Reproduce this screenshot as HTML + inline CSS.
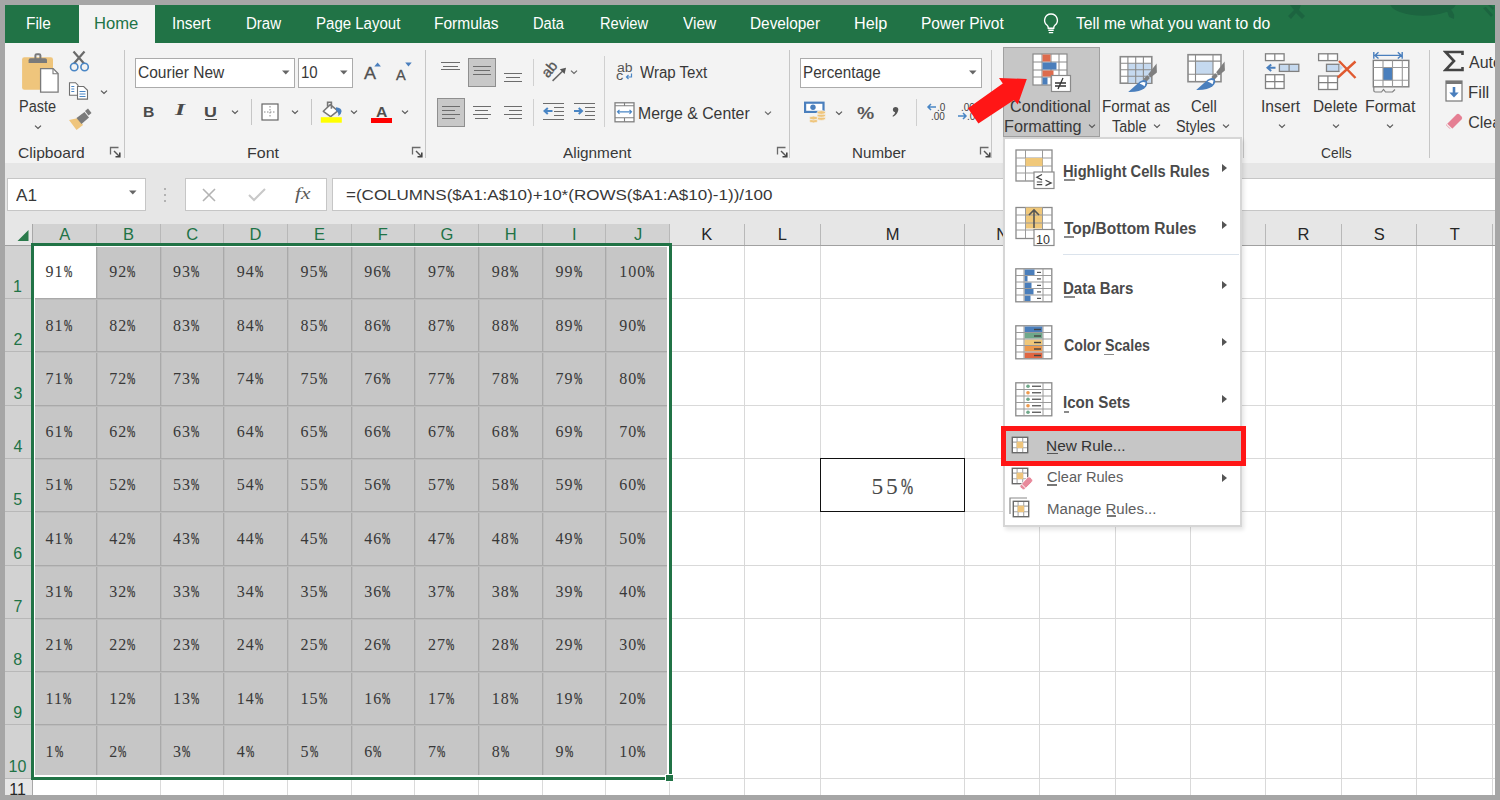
<!DOCTYPE html>
<html><head><meta charset="utf-8"><style>
html,body{margin:0;padding:0;width:1500px;height:800px;overflow:hidden;background:#a6a6a6}
body>div,body>svg{position:absolute}
.t{white-space:nowrap;transform-origin:0 0}
.c{font:16px/16px 'Liberation Serif',serif;letter-spacing:1px;color:#383838}
.p{display:inline-block;transform:scaleX(.62);transform-origin:0 0;-webkit-text-stroke:0.4px currentColor}
</style></head><body>
<div style="left:5px;top:5px;width:1490px;height:38px;background:#217346"></div>
<svg style="left:1280px;top:5px;" width="215" height="16" viewBox="0 0 215 16"><g fill="#1c6440"><ellipse cx="143" cy="-2" rx="33" ry="12.8"/><path d="M166 3q9 1 8 11l-5-2z"/><path d="M10 0l4 5-6 6 3 3 5-6 6 6 3-3-6-6 2-5z"/><path d="M203 3l8 9 2-2-7-8z M208 0l5 5 1-2-3-3z"/></g></svg>
<div style="left:79.4px;top:5px;width:75.6px;height:38px;background:#f3f3f3"></div>
<div class="t" style="left:25.60px;top:16.46px;font-size:16px;line-height:16px;font-family:'Liberation Sans',sans-serif;color:#ffffff;transform:scaleX(0.9625);">File</div>
<div class="t" style="left:94.30px;top:16.46px;font-size:16px;line-height:16px;font-family:'Liberation Sans',sans-serif;color:#217346;transform:scaleX(1.0380);">Home</div>
<div class="t" style="left:172.06px;top:16.46px;font-size:16px;line-height:16px;font-family:'Liberation Sans',sans-serif;color:#ffffff;transform:scaleX(0.9621);">Insert</div>
<div class="t" style="left:245.53px;top:16.46px;font-size:16px;line-height:16px;font-family:'Liberation Sans',sans-serif;color:#ffffff;transform:scaleX(0.9389);">Draw</div>
<div class="t" style="left:315.73px;top:16.46px;font-size:16px;line-height:16px;font-family:'Liberation Sans',sans-serif;color:#ffffff;transform:scaleX(0.9390);">Page Layout</div>
<div class="t" style="left:434.39px;top:16.46px;font-size:16px;line-height:16px;font-family:'Liberation Sans',sans-serif;color:#ffffff;transform:scaleX(0.9692);">Formulas</div>
<div class="t" style="left:533.45px;top:16.46px;font-size:16px;line-height:16px;font-family:'Liberation Sans',sans-serif;color:#ffffff;transform:scaleX(0.9160);">Data</div>
<div class="t" style="left:599.85px;top:16.46px;font-size:16px;line-height:16px;font-family:'Liberation Sans',sans-serif;color:#ffffff;transform:scaleX(0.9171);">Review</div>
<div class="t" style="left:683.00px;top:16.46px;font-size:16px;line-height:16px;font-family:'Liberation Sans',sans-serif;color:#ffffff;transform:scaleX(0.9635);">View</div>
<div class="t" style="left:749.80px;top:16.46px;font-size:16px;line-height:16px;font-family:'Liberation Sans',sans-serif;color:#ffffff;transform:scaleX(0.9600);">Developer</div>
<div class="t" style="left:854.33px;top:16.46px;font-size:16px;line-height:16px;font-family:'Liberation Sans',sans-serif;color:#ffffff;transform:scaleX(1.0129);">Help</div>
<div class="t" style="left:921.39px;top:16.46px;font-size:16px;line-height:16px;font-family:'Liberation Sans',sans-serif;color:#ffffff;transform:scaleX(0.9690);">Power Pivot</div>
<div class="t" style="left:1075.75px;top:16.46px;font-size:16px;line-height:16px;font-family:'Liberation Sans',sans-serif;color:#ffffff;transform:scaleX(0.9837);">Tell me what you want to do</div>
<svg style="left:1040px;top:11px;" width="22" height="24" viewBox="0 0 22 24"><path d="M11 3a6.3 6.3 0 0 0-3.9 11.3c.9.8 1.2 1.7 1.2 2.9h5.4c0-1.2.3-2.1 1.2-2.9A6.3 6.3 0 0 0 11 3z" fill="none" stroke="#fff" stroke-width="1.4"/><path d="M8.3 19.3h5.4M8.8 21.6h4.4" stroke="#fff" stroke-width="1.4"/></svg>
<div style="left:5px;top:43px;width:1490px;height:120px;background:#f3f3f3"></div>
<div style="left:5px;top:162.5px;width:1490px;height:1.2px;background:#d2d2d2"></div>
<div style="left:124px;top:50px;width:1px;height:108px;background:#c6c6c6"></div>
<div style="left:425px;top:50px;width:1px;height:108px;background:#c6c6c6"></div>
<div style="left:789px;top:50px;width:1px;height:108px;background:#c6c6c6"></div>
<div style="left:991px;top:50px;width:1px;height:108px;background:#c6c6c6"></div>
<div style="left:1243px;top:50px;width:1px;height:108px;background:#c6c6c6"></div>
<div style="left:1429px;top:50px;width:1px;height:108px;background:#c6c6c6"></div>
<div class="t" style="left:18.22px;top:144.90px;font-size:15px;line-height:15px;font-family:'Liberation Sans',sans-serif;color:#383838;transform:scaleX(1.0400);">Clipboard</div>
<div class="t" style="left:247.27px;top:144.90px;font-size:15px;line-height:15px;font-family:'Liberation Sans',sans-serif;color:#383838;transform:scaleX(1.0667);">Font</div>
<div class="t" style="left:562.50px;top:144.90px;font-size:15px;line-height:15px;font-family:'Liberation Sans',sans-serif;color:#383838;transform:scaleX(1.0226);">Alignment</div>
<div class="t" style="left:852.44px;top:144.90px;font-size:15px;line-height:15px;font-family:'Liberation Sans',sans-serif;color:#383838;transform:scaleX(1.0106);">Number</div>
<div class="t" style="left:1320.81px;top:144.90px;font-size:15px;line-height:15px;font-family:'Liberation Sans',sans-serif;color:#383838;transform:scaleX(0.9219);">Cells</div>
<svg style="left:108.5px;top:146px;" width="14" height="14" viewBox="0 0 14 14"><path d="M1.5 8.5V1.5H9.5" fill="none" stroke="#6a6a6a" stroke-width="1.3"/><path d="M5 5L10.5 10.5" stroke="#555" stroke-width="1.4"/><path d="M10.8 6.5V10.8H6.5" fill="none" stroke="#444" stroke-width="1.6"/></svg>
<svg style="left:410.5px;top:146px;" width="14" height="14" viewBox="0 0 14 14"><path d="M1.5 8.5V1.5H9.5" fill="none" stroke="#6a6a6a" stroke-width="1.3"/><path d="M5 5L10.5 10.5" stroke="#555" stroke-width="1.4"/><path d="M10.8 6.5V10.8H6.5" fill="none" stroke="#444" stroke-width="1.6"/></svg>
<svg style="left:775.5px;top:146px;" width="14" height="14" viewBox="0 0 14 14"><path d="M1.5 8.5V1.5H9.5" fill="none" stroke="#6a6a6a" stroke-width="1.3"/><path d="M5 5L10.5 10.5" stroke="#555" stroke-width="1.4"/><path d="M10.8 6.5V10.8H6.5" fill="none" stroke="#444" stroke-width="1.6"/></svg>
<svg style="left:978.5px;top:146px;" width="14" height="14" viewBox="0 0 14 14"><path d="M1.5 8.5V1.5H9.5" fill="none" stroke="#6a6a6a" stroke-width="1.3"/><path d="M5 5L10.5 10.5" stroke="#555" stroke-width="1.4"/><path d="M10.8 6.5V10.8H6.5" fill="none" stroke="#444" stroke-width="1.6"/></svg>
<svg style="left:15px;top:48px;" width="80" height="86" viewBox="0 0 80 86"><rect x="7.1" y="9.2" width="30.9" height="32.6" rx="2.2" fill="#efc57c"/><path d="M13.6 15V12.2Q13.6 10.3 15.5 10.3H30.1Q32 10.3 32 12.2V15Z" fill="#7a7a7a"/><rect x="20.4" y="6.3" width="5" height="5.5" rx="1.3" fill="none" stroke="#7a7a7a" stroke-width="2"/><path d="M25.6 20.6H38.2L43.1 25.5V44.2H25.6Z" fill="#fff" stroke="#7a7a7a" stroke-width="1.3"/><path d="M38 20.8V25.7H42.9" fill="none" stroke="#7a7a7a" stroke-width="1.1"/><path d="M58.5 3.5L69 15.5M69.5 3.5L59 15.5" stroke="#6a6a6a" stroke-width="2.2"/><circle cx="59.2" cy="19" r="3.7" fill="none" stroke="#4a86c5" stroke-width="1.6"/><circle cx="69.6" cy="19" r="3.7" fill="none" stroke="#4a86c5" stroke-width="1.6"/><path d="M54.5 34.7H60.5L63 37.2V47.3H54.5Z" fill="#fff" stroke="#707070" stroke-width="1.1"/><path d="M62.5 38.5H68.7L72.5 42.3V51.1H62.5Z" fill="#fff" stroke="#707070" stroke-width="1.1"/><path d="M56.3 38.5h3M56.3 41h3M56.3 43.5h3M64.5 43.5h6M64.5 46h6M64.5 48.5h6" stroke="#4a86c5" stroke-width="1.1"/><path d="M68 72L75.5 78L78.5 75L71.5 69Z" fill="#efc57c" opacity="0"/><path d="M54 72L63.5 70L68 77L61.5 82Z" fill="#efc57c"/><path d="M61.5 70L69.5 64L74 69.5L66.5 76Z" fill="#7a7a7a"/><path d="M70 63L73 60.5L76.5 65L73.5 67.5Z" fill="#7a7a7a"/></svg>
<div class="t" style="left:19.27px;top:99.06px;font-size:16px;line-height:16px;font-family:'Liberation Sans',sans-serif;color:#383838;transform:scaleX(0.9077);">Paste</div>
<svg style="left:33px;top:124px;" width="10" height="6" viewBox="0 0 10 6"><path d="M2 1.6l3 2.8 3-2.8" fill="none" stroke="#555" stroke-width="1.2"/></svg>
<svg style="left:98.5px;top:89px;" width="10" height="6" viewBox="0 0 10 6"><path d="M2 1.6l3 2.8 3-2.8" fill="none" stroke="#555" stroke-width="1.2"/></svg>
<div style="left:135px;top:57.5px;width:160px;height:30px;background:#fff;box-sizing:border-box;border:1px solid #ababab"></div>
<div class="t" style="left:138.47px;top:65.46px;font-size:16px;line-height:16px;font-family:'Liberation Sans',sans-serif;color:#383838;transform:scaleX(0.9705);">Courier New</div>
<svg style="left:281.7px;top:70px;" width="8" height="5" viewBox="0 0 8 5"><path d="M0 0.5h7.5L3.75 4.5z" fill="#666"/></svg>
<div style="left:297.5px;top:57.5px;width:55px;height:30px;background:#fff;box-sizing:border-box;border:1px solid #ababab"></div>
<div class="t" style="left:300.83px;top:65.46px;font-size:16px;line-height:16px;font-family:'Liberation Sans',sans-serif;color:#383838;transform:scaleX(0.9375);">10</div>
<svg style="left:340.2px;top:70px;" width="8" height="5" viewBox="0 0 8 5"><path d="M0 0.5h7.5L3.75 4.5z" fill="#666"/></svg>
<div class="t" style="left:364.10px;top:65.11px;font-size:17px;line-height:17px;font-family:'Liberation Sans',sans-serif;color:#505050;transform:scaleX(1.0578);-webkit-text-stroke:0.3px #505050;">A</div>
<svg style="left:373.8px;top:62px;" width="8" height="5" viewBox="0 0 8 5"><path d="M0.3 4.6L3.6 0.6L6.9 4.6Z" fill="#4a7fbd"/></svg>
<div class="t" style="left:396.30px;top:67.65px;font-size:14px;line-height:14px;font-family:'Liberation Sans',sans-serif;color:#505050;transform:scaleX(1.0378);-webkit-text-stroke:0.3px #505050;">A</div>
<svg style="left:405px;top:62.3px;" width="8" height="5" viewBox="0 0 8 5"><path d="M0.2 0.4H6.7L3.45 4.4Z" fill="#4a7fbd"/></svg>
<div class="t" style="left:142.65px;top:104.00px;font-size:15px;line-height:15px;font-family:'Liberation Sans',sans-serif;font-weight:bold;color:#4a4a4a;transform:scaleX(1.0486);">B</div>
<div class="t" style="left:174.60px;top:102.44px;font-size:16px;line-height:16px;font-family:'Liberation Serif',serif;color:#4a4a4a;transform:scaleX(1.6167);font-style:italic;font-weight:bold;">I</div>
<div class="t" style="left:204.31px;top:104.00px;font-size:15px;line-height:15px;font-family:'Liberation Sans',sans-serif;font-weight:bold;color:#4a4a4a;transform:scaleX(1.1889);">U</div>
<div style="left:205px;top:118.5px;width:12px;height:1.5px;background:#4a4a4a"></div>
<svg style="left:230px;top:109.3px;" width="10" height="6" viewBox="0 0 10 6"><path d="M2 1.6l3 2.8 3-2.8" fill="none" stroke="#555" stroke-width="1.2"/></svg>
<div style="left:251px;top:99px;width:1px;height:26px;background:#c6c6c6"></div>
<svg style="left:261px;top:103px;" width="18" height="18" viewBox="0 0 18 18"><rect x="1" y="1" width="16" height="16" fill="#fff" stroke="#666" stroke-width="1.2"/><path d="M9 3v12M3 9h12" stroke="#888" stroke-width="1" stroke-dasharray="1.5 1.5"/></svg>
<svg style="left:290px;top:109.3px;" width="10" height="6" viewBox="0 0 10 6"><path d="M2 1.6l3 2.8 3-2.8" fill="none" stroke="#555" stroke-width="1.2"/></svg>
<div style="left:311px;top:99px;width:1px;height:26px;background:#c6c6c6"></div>
<svg style="left:315px;top:98px;" width="30" height="28" viewBox="0 0 30 28"><path d="M8.3 13.3L15.3 6.6L22.8 12.8L15.6 18.6Z" fill="#fff" stroke="#777" stroke-width="1.5" stroke-linejoin="round"/><path d="M12.6 8.8V4.3H16.4V10.8" fill="none" stroke="#777" stroke-width="1.6"/><path d="M21 9.3Q26.5 9.8 26.6 13.3Q26.5 16 23.3 18.3Q24 14.5 21 12.5Z" fill="#4a7fbd"/><rect x="5.8" y="19.2" width="21" height="5.5" fill="#ffff00"/></svg>
<svg style="left:349px;top:109.3px;" width="10" height="6" viewBox="0 0 10 6"><path d="M2 1.6l3 2.8 3-2.8" fill="none" stroke="#555" stroke-width="1.2"/></svg>
<div class="t" style="left:375.98px;top:103.80px;font-size:15px;line-height:15px;font-family:'Liberation Sans',sans-serif;font-weight:bold;color:#505050;transform:scaleX(1.0500);">A</div>
<div style="left:371px;top:117.5px;width:21px;height:5px;background:#ff0000"></div>
<svg style="left:400px;top:109.3px;" width="10" height="6" viewBox="0 0 10 6"><path d="M2 1.6l3 2.8 3-2.8" fill="none" stroke="#555" stroke-width="1.2"/></svg>
<div style="left:441px;top:62px;width:19px;height:1px;background:#6c6c6c"></div>
<div style="left:443px;top:66px;width:15px;height:1px;background:#6c6c6c"></div>
<div style="left:441px;top:69px;width:19px;height:1px;background:#6c6c6c"></div>
<div style="left:468px;top:57.7px;width:27.8px;height:29.2px;background:#c8c8c8;box-sizing:border-box;border:1.2px solid #8e8e8e"></div>
<div style="left:473px;top:66px;width:18px;height:1px;background:#6c6c6c"></div>
<div style="left:474px;top:70px;width:16px;height:1px;background:#6c6c6c"></div>
<div style="left:473px;top:74px;width:18px;height:1px;background:#6c6c6c"></div>
<div style="left:504px;top:73px;width:18px;height:1px;background:#6c6c6c"></div>
<div style="left:506px;top:77px;width:14px;height:1px;background:#6c6c6c"></div>
<div style="left:504px;top:81px;width:18px;height:1px;background:#6c6c6c"></div>
<div style="left:533px;top:58.8px;width:1px;height:27.2px;background:#d0d0d0"></div>
<svg style="left:540px;top:60px;" width="30" height="24" viewBox="0 0 30 24"><text x="0" y="0" font-family="Liberation Sans" font-size="14.5" fill="#555" stroke="#555" stroke-width="0.35" transform="translate(7.9 18.5) rotate(-50)">ab</text><path d="M12.6 20.9L23.5 10.3" stroke="#666" stroke-width="1.5"/><path d="M26 7.8L19.8 9.2L24.6 14Z" fill="#555"/></svg>
<svg style="left:568.6px;top:68.7px;" width="10" height="6" viewBox="0 0 10 6"><path d="M2 1.6l3 2.8 3-2.8" fill="none" stroke="#666" stroke-width="1.2"/></svg>
<div style="left:604px;top:56.4px;width:1px;height:71px;background:#d0d0d0"></div>
<div class="t" style="left:616.52px;top:62.14px;font-size:12px;line-height:12px;font-family:'Liberation Sans',sans-serif;color:#555;transform:scaleX(1.1680);">ab</div>
<div class="t" style="left:616.49px;top:70.34px;font-size:12px;line-height:12px;font-family:'Liberation Sans',sans-serif;color:#555;transform:scaleX(1.2190);">c</div>
<svg style="left:625px;top:73px;" width="8" height="7" viewBox="0 0 8 7"><path d="M6.5 0.5v3.5H1.5M3.5 2L1.5 4l2 2" fill="none" stroke="#4a86c5" stroke-width="1.2"/></svg>
<div class="t" style="left:639.50px;top:65.46px;font-size:16px;line-height:16px;font-family:'Liberation Sans',sans-serif;color:#383838;transform:scaleX(0.9404);">Wrap Text</div>
<div style="left:436.6px;top:98px;width:28px;height:29.4px;background:#c8c8c8;box-sizing:border-box;border:1.2px solid #8e8e8e"></div>
<div style="left:442px;top:106px;width:18px;height:1px;background:#6c6c6c"></div>
<div style="left:473px;top:106px;width:18px;height:1px;background:#6c6c6c"></div>
<div style="left:504px;top:106px;width:18px;height:1px;background:#6c6c6c"></div>
<div style="left:442px;top:110px;width:13px;height:1px;background:#6c6c6c"></div>
<div style="left:475px;top:110px;width:13px;height:1px;background:#6c6c6c"></div>
<div style="left:509px;top:110px;width:13px;height:1px;background:#6c6c6c"></div>
<div style="left:442px;top:114px;width:18px;height:1px;background:#6c6c6c"></div>
<div style="left:473px;top:114px;width:18px;height:1px;background:#6c6c6c"></div>
<div style="left:504px;top:114px;width:18px;height:1px;background:#6c6c6c"></div>
<div style="left:442px;top:118px;width:13px;height:1px;background:#6c6c6c"></div>
<div style="left:475px;top:118px;width:13px;height:1px;background:#6c6c6c"></div>
<div style="left:509px;top:118px;width:13px;height:1px;background:#6c6c6c"></div>
<div style="left:533px;top:99.4px;width:1px;height:27px;background:#d0d0d0"></div>
<div style="left:543px;top:103px;width:21px;height:1px;background:#6c6c6c"></div>
<div style="left:554px;top:107px;width:10px;height:1px;background:#6c6c6c"></div>
<div style="left:554px;top:111px;width:10px;height:1px;background:#6c6c6c"></div>
<div style="left:554px;top:115px;width:10px;height:1px;background:#6c6c6c"></div>
<div style="left:543px;top:119px;width:21px;height:1px;background:#6c6c6c"></div>
<svg style="left:542.8px;top:107px;" width="10" height="8" viewBox="0 0 10 8"><path d="M9.5 4H2M4.8 1L1.5 4l3.3 3" fill="none" stroke="#4a86c5" stroke-width="2"/></svg>
<div style="left:574px;top:103px;width:21px;height:1px;background:#6c6c6c"></div>
<div style="left:585px;top:107px;width:10px;height:1px;background:#6c6c6c"></div>
<div style="left:585px;top:111px;width:10px;height:1px;background:#6c6c6c"></div>
<div style="left:585px;top:115px;width:10px;height:1px;background:#6c6c6c"></div>
<div style="left:574px;top:119px;width:21px;height:1px;background:#6c6c6c"></div>
<svg style="left:574px;top:107px;" width="10" height="8" viewBox="0 0 10 8"><path d="M0 4h7.5M4.7 1L8 4l-3.3 3" fill="none" stroke="#4a86c5" stroke-width="2"/></svg>
<svg style="left:613.5px;top:101.5px;" width="21" height="21" viewBox="0 0 21 21"><rect x="1" y="0.8" width="19" height="19" fill="#fff" stroke="#808080" stroke-width="1.3"/><path d="M1 3.7h19M1 15.8h19M10.5 0.8v3M10.5 15.8v4" stroke="#808080" stroke-width="1.1"/><path d="M3.5 9.8h14M5.5 7.8l-2 2 2 2M15.5 7.8l2 2-2 2" fill="none" stroke="#4a86c5" stroke-width="1.2"/></svg>
<div class="t" style="left:638.26px;top:105.96px;font-size:16px;line-height:16px;font-family:'Liberation Sans',sans-serif;color:#383838;transform:scaleX(0.9888);">Merge &amp; Center</div>
<svg style="left:762.5px;top:109.5px;" width="10" height="6" viewBox="0 0 10 6"><path d="M2 1.6l3 2.8 3-2.8" fill="none" stroke="#666" stroke-width="1.2"/></svg>
<div style="left:800px;top:57.5px;width:182px;height:30px;background:#fff;box-sizing:border-box;border:1px solid #ababab"></div>
<div class="t" style="left:802.81px;top:65.46px;font-size:16px;line-height:16px;font-family:'Liberation Sans',sans-serif;color:#383838;transform:scaleX(0.9500);">Percentage</div>
<svg style="left:968.5px;top:70px;" width="8" height="5" viewBox="0 0 8 5"><path d="M0 0.5h7.5L3.75 4.5z" fill="#666"/></svg>
<svg style="left:803px;top:100px;" width="26" height="24" viewBox="0 0 26 24"><rect x="1" y="1.6" width="20.6" height="11.4" fill="#4a7fbd"/><rect x="3.2" y="3.8" width="16.2" height="7" fill="#fff"/><circle cx="10" cy="7.3" r="2.7" fill="#4a7fbd"/><g fill="#efc57c" stroke="#f3f3f3" stroke-width="0.8"><ellipse cx="18.3" cy="18.5" rx="4.2" ry="1.9"/><ellipse cx="18.3" cy="15.5" rx="4.2" ry="1.9"/><ellipse cx="18.3" cy="12.5" rx="4.2" ry="1.9"/><ellipse cx="10.5" cy="21" rx="4.2" ry="1.9"/><ellipse cx="10.5" cy="18" rx="4.2" ry="1.9"/></g></svg>
<svg style="left:834px;top:110px;" width="10" height="6" viewBox="0 0 10 6"><path d="M2 1.6l3 2.8 3-2.8" fill="none" stroke="#555" stroke-width="1.2"/></svg>
<div class="t" style="left:857.10px;top:106.46px;font-size:16px;line-height:16px;font-family:'Liberation Sans',sans-serif;font-weight:bold;color:#595959;transform:scaleX(1.2075);">%</div>
<svg style="left:890px;top:105px;" width="10" height="13" viewBox="0 0 10 13"><circle cx="5.6" cy="4.6" r="2.7" fill="#555"/><path d="M7.9 5.5Q7.6 9.5 3 11.8L2.5 11Q5.2 9 5.3 6.5Z" fill="#555"/></svg>
<div style="left:916px;top:99px;width:1px;height:27px;background:#cfcfcf"></div>
<svg style="left:925px;top:102px;" width="26" height="20" viewBox="0 0 26 20"><path d="M11 5H3M6 2L3 5l3 3" fill="none" stroke="#4a86c5" stroke-width="1.5"/><text x="12" y="9" font-family="Liberation Sans" font-size="10" fill="#444">.0</text><text x="6" y="18" font-family="Liberation Sans" font-size="10" fill="#444">.00</text></svg>
<svg style="left:955px;top:102px;" width="26" height="20" viewBox="0 0 26 20"><text x="6" y="9" font-family="Liberation Sans" font-size="10" fill="#444">.00</text><path d="M3 14h8M8 11l3 3-3 3" fill="none" stroke="#4a86c5" stroke-width="1.5"/><text x="12" y="18" font-family="Liberation Sans" font-size="10" fill="#444">.0</text></svg>
<div style="left:1003px;top:47.3px;width:97px;height:89.5px;background:#c6c6c6;box-sizing:border-box;border:1px solid #a0a0a0"></div>
<svg style="left:1032px;top:53px;" width="40" height="40" viewBox="0 0 40 40"><rect x="1" y="1" width="34" height="31" fill="#fff" stroke="#8a8a8a" stroke-width="1.2"/><path d="M10 1v31M19 1v31M27 1v31M1 9h34M1 17h34M1 24h34" stroke="#8a8a8a" stroke-width="1"/><rect x="10.5" y="1.5" width="8" height="7" fill="#dd6b4d"/><rect x="10.5" y="9.5" width="14" height="7" fill="#4a7ebb"/><rect x="10.5" y="17.5" width="11" height="6" fill="#dd6b4d"/><rect x="10.5" y="24.5" width="5" height="7" fill="#4a7ebb"/><rect x="19.5" y="22.5" width="19" height="16" fill="#fff" stroke="#8a8a8a" stroke-width="1.2"/><path d="M23 30h11M23 33h11M31 25l-5 11" stroke="#333" stroke-width="1.3"/></svg>
<div class="t" style="left:1010.24px;top:99.46px;font-size:16px;line-height:16px;font-family:'Liberation Sans',sans-serif;color:#383838;transform:scaleX(1.0096);">Conditional</div>
<div class="t" style="left:1004.33px;top:119.46px;font-size:16px;line-height:16px;font-family:'Liberation Sans',sans-serif;color:#383838;transform:scaleX(1.0155);">Formatting</div>
<svg style="left:1086.5px;top:123px;" width="10" height="6" viewBox="0 0 10 6"><path d="M2 1.6l3 2.8 3-2.8" fill="none" stroke="#555" stroke-width="1.2"/></svg>
<svg style="left:1115px;top:50px;" width="50" height="45" viewBox="0 0 50 45"><rect x="5.3" y="6.7" width="31.5" height="26.5" fill="#fff" stroke="#8a8a8a" stroke-width="1.6"/><rect x="12.9" y="13.2" width="23" height="19.5" fill="#c5d9ef"/><path d="M12.9 6.7v26.5M20.7 6.7v26.5M28.4 6.7v26.5M5.3 13.2h31.5M5.3 19.7h31.5M5.3 26.2h31.5" stroke="#8a8a8a" stroke-width="1.1"/><g transform="translate(0 0)"><path d="M41.6 13.5L41.9 22.5L35.7 27.6L33.2 24.2Z" fill="#7f7f7f"/><path d="M28.4 29L32.3 25.3L34.9 28.1L31.2 32Z" fill="#7f7f7f"/><path d="M13.2 41.9L25 31.5Q29 28.5 31.8 31.2Q33.5 34.5 29.5 38.3Q25 42.2 13.2 41.9Z" fill="#4a7fbd"/><path d="M24.5 33.6Q27.5 30.8 30.6 32.6L29.6 36.3Q27.5 34.6 24.5 33.6Z" fill="#fff"/></g></svg>
<svg style="left:1182.5px;top:47.5px;" width="50" height="45" viewBox="0 0 50 45"><rect x="5" y="6.7" width="33" height="27" fill="#fff" stroke="#8a8a8a" stroke-width="1.6"/><rect x="12.5" y="13.1" width="17.5" height="13.1" fill="#c5d9ef"/><path d="M12.5 6.7v27M30 6.7v27M5 13.1h33M5 26.2h33" stroke="#8a8a8a" stroke-width="1.1"/><g transform="translate(0 0)"><path d="M41.6 13.5L41.9 22.5L35.7 27.6L33.2 24.2Z" fill="#7f7f7f"/><path d="M28.4 29L32.3 25.3L34.9 28.1L31.2 32Z" fill="#7f7f7f"/><path d="M13.2 41.9L25 31.5Q29 28.5 31.8 31.2Q33.5 34.5 29.5 38.3Q25 42.2 13.2 41.9Z" fill="#4a7fbd"/><path d="M24.5 33.6Q27.5 30.8 30.6 32.6L29.6 36.3Q27.5 34.6 24.5 33.6Z" fill="#fff"/></g></svg>
<div class="t" style="left:1102.32px;top:99.46px;font-size:16px;line-height:16px;font-family:'Liberation Sans',sans-serif;color:#383838;transform:scaleX(0.9466);">Format as</div>
<div class="t" style="left:1112.28px;top:119.46px;font-size:16px;line-height:16px;font-family:'Liberation Sans',sans-serif;color:#383838;transform:scaleX(0.8993);">Table</div>
<svg style="left:1152px;top:123px;" width="10" height="6" viewBox="0 0 10 6"><path d="M2 1.6l3 2.8 3-2.8" fill="none" stroke="#555" stroke-width="1.2"/></svg>
<div class="t" style="left:1191.30px;top:99.46px;font-size:16px;line-height:16px;font-family:'Liberation Sans',sans-serif;color:#383838;transform:scaleX(0.9320);">Cell</div>
<div class="t" style="left:1176.33px;top:119.46px;font-size:16px;line-height:16px;font-family:'Liberation Sans',sans-serif;color:#383838;transform:scaleX(0.8994);">Styles</div>
<svg style="left:1221px;top:123px;" width="10" height="6" viewBox="0 0 10 6"><path d="M2 1.6l3 2.8 3-2.8" fill="none" stroke="#555" stroke-width="1.2"/></svg>
<svg style="left:1255px;top:45px;" width="160" height="50" viewBox="0 0 160 50"><g fill="#fff" stroke="#808080" stroke-width="1.3"><rect x="10.5" y="8.8" width="18.6" height="6.8"/><rect x="10.5" y="29.7" width="18.6" height="13.8"/><rect x="63.6" y="8.8" width="18.9" height="6.8"/><rect x="63.6" y="31" width="18.9" height="13.5"/></g><path d="M19.8 8.8v6.8M10.5 36.6h18.6M19.8 29.7v13.8M72.9 8.8v6.8M63.6 37.7h18.9M72.9 31v13.5" stroke="#808080" stroke-width="1.2"/><rect x="24.4" y="19.3" width="19.4" height="7.1" fill="#c5d9ef" stroke="#808080" stroke-width="1.3"/><path d="M34.1 19.3v7.1" stroke="#808080" stroke-width="1.2"/><path d="M20.5 22.8H13M16.2 19.6L12.5 22.8L16.2 26" fill="none" stroke="#4a7fbd" stroke-width="2"/><rect x="71.5" y="19.3" width="12.5" height="7.1" fill="#c5d9ef" stroke="#808080" stroke-width="1.3"/><path d="M84.5 19.5L88 22.8L84.5 26Z" fill="#c5d9ef"/><path d="M84 16L100.5 33M100.5 16.5L82.8 32.5" stroke="#e05a30" stroke-width="2.4"/><path d="M118.8 7v6.8M147.2 7v6.8M119.5 10.4h27M123.5 7.3L120 10.4l3.5 3.1M142.8 7.3l3.5 3.1-3.5 3.1" fill="none" stroke="#4a7fbd" stroke-width="1.4"/><rect x="118.3" y="15.4" width="35.5" height="26.4" fill="#fff" stroke="#808080" stroke-width="1.4"/><rect x="128" y="22.5" width="9.5" height="12.7" fill="#4a7fbd"/><path d="M128 15.4v26.4M137.5 15.4v26.4M147.3 15.4v26.4M118.3 22.5h35.5M118.3 35.2h35.5" stroke="#9a9a9a" stroke-width="1.1"/><path d="M118.8 41.8V45.5Q118.8 47 120.3 47H126.5L128.5 44.5L130.5 47H137.5L140 44.5" fill="none" stroke="#808080" stroke-width="1.2"/></svg>
<div class="t" style="left:1261.04px;top:99.46px;font-size:16px;line-height:16px;font-family:'Liberation Sans',sans-serif;color:#383838;transform:scaleX(0.9752);">Insert</div>
<svg style="left:1277px;top:123px;" width="10" height="6" viewBox="0 0 10 6"><path d="M2 1.6l3 2.8 3-2.8" fill="none" stroke="#555" stroke-width="1.2"/></svg>
<div class="t" style="left:1313.30px;top:99.46px;font-size:16px;line-height:16px;font-family:'Liberation Sans',sans-serif;color:#383838;transform:scaleX(0.9605);">Delete</div>
<svg style="left:1331px;top:123px;" width="10" height="6" viewBox="0 0 10 6"><path d="M2 1.6l3 2.8 3-2.8" fill="none" stroke="#555" stroke-width="1.2"/></svg>
<div class="t" style="left:1365.26px;top:99.46px;font-size:16px;line-height:16px;font-family:'Liberation Sans',sans-serif;color:#383838;transform:scaleX(0.9929);">Format</div>
<svg style="left:1385px;top:123px;" width="10" height="6" viewBox="0 0 10 6"><path d="M2 1.6l3 2.8 3-2.8" fill="none" stroke="#555" stroke-width="1.2"/></svg>
<svg style="left:1443px;top:50px;" width="22" height="22" viewBox="0 0 22 22"><path d="M19.5 5V2H2.5l8.5 9-8.5 9h17v-3" fill="none" stroke="#444" stroke-width="2.6" stroke-linejoin="miter"/></svg>
<div class="t" style="left:1469.00px;top:55.46px;font-size:16px;line-height:16px;font-family:'Liberation Sans',sans-serif;color:#383838;">AutoSum</div>
<svg style="left:1445px;top:80px;" width="20" height="22" viewBox="0 0 20 22"><rect x="1" y="1" width="16" height="20" fill="#fff" stroke="#777" stroke-width="1.2"/><rect x="1" y="1" width="16" height="3" fill="#777"/><path d="M9 7v7" stroke="#4a7fbd" stroke-width="2.6"/><path d="M4.3 12.5L9 17.6L13.7 12.5Z" fill="#4a7fbd"/></svg>
<div class="t" style="left:1467.70px;top:84.96px;font-size:16px;line-height:16px;font-family:'Liberation Sans',sans-serif;color:#383838;transform:scaleX(1.0411);">Fill</div>
<svg style="left:1444px;top:110px;" width="22" height="20" viewBox="0 0 22 20"><path d="M5.5 18.5L2 15L12.5 4.5Q14 3 15.5 4.5L17.5 6.5Q19 8 17.5 9.5L8.5 18.5Z" fill="#e57f93"/><path d="M2.8 14.2L7.8 19" stroke="#f3f3f3" stroke-width="1.2"/></svg>
<div class="t" style="left:1468.25px;top:114.96px;font-size:16px;line-height:16px;font-family:'Liberation Sans',sans-serif;color:#383838;">Clear</div>
<div style="left:5px;top:163px;width:1490px;height:61px;background:#e6e6e6"></div>
<div style="left:7px;top:177.5px;width:138.5px;height:33px;background:#fff;box-sizing:border-box;border:1px solid #c6c6c6"></div>
<div class="t" style="left:15.70px;top:187.03px;font-size:16.5px;line-height:16.5px;font-family:'Liberation Sans',sans-serif;color:#383838;transform:scaleX(1.0410);">A1</div>
<svg style="left:128.5px;top:190px;" width="8" height="5" viewBox="0 0 8 5"><path d="M0 0.5h7.5L3.75 4.5z" fill="#666"/></svg>
<div style="left:164px;top:188px;width:2px;height:2px;background:#a0a0a0;border-radius:1px"></div>
<div style="left:164px;top:194px;width:2px;height:2px;background:#a0a0a0;border-radius:1px"></div>
<div style="left:164px;top:200px;width:2px;height:2px;background:#a0a0a0;border-radius:1px"></div>
<div style="left:184.5px;top:177.5px;width:142.5px;height:33px;background:#fff;box-sizing:border-box;border:1px solid #c6c6c6"></div>
<svg style="left:201px;top:188px;" width="16" height="14" viewBox="0 0 16 14"><path d="M2 1l12 12M14 1L2 13" stroke="#b3b3b3" stroke-width="1.6"/></svg>
<svg style="left:247px;top:188px;" width="20" height="14" viewBox="0 0 20 14"><path d="M2 7l5 5 11-11" fill="none" stroke="#c8c8c8" stroke-width="2"/></svg>
<div class="t" style="left:294.67px;top:186.24px;font-size:16px;line-height:16px;font-family:'Liberation Serif',serif;color:#5a5a5a;transform:scaleX(1.3333);font-style:italic;">fx</div>
<div style="left:331.5px;top:177.5px;width:1170px;height:33px;background:#fff;box-sizing:border-box;border:1px solid #c6c6c6"></div>
<div class="t" style="left:346.09px;top:188.15px;font-size:14px;line-height:14px;font-family:'Liberation Sans',sans-serif;color:#383838;transform:scaleX(1.2152);">=(COLUMNS($A1:A$10)+10*(ROWS($A1:A$10)-1))/100</div>
<div style="left:5px;top:224px;width:1490px;height:571px;background:#fff"></div>
<div style="left:5px;top:224px;width:1490px;height:21px;background:#e6e6e6"></div>
<div style="left:32.5px;top:224px;width:637.5px;height:21px;background:#d2d2d2"></div>
<div style="left:5px;top:245px;width:27.5px;height:550px;background:#e6e6e6"></div>
<div style="left:5px;top:245px;width:27.5px;height:532.8px;background:#d2d2d2"></div>
<svg style="left:16px;top:229px;" width="14" height="13" viewBox="0 0 14 13"><path d="M13 0V12H0z" fill="#217346" opacity=".0"/><path d="M12.5 1V12H1.5z" fill="#2a7a4b"/></svg>
<div style="left:32.5px;top:244.8px;width:637.5px;height:533.0px;background:#c6c6c6"></div>
<div style="left:32.5px;top:244.8px;width:63.75px;height:53.30000000000001px;background:#fff"></div>
<div style="left:96px;top:224px;width:1px;height:21px;background:#b8b8b8"></div>
<div style="left:96px;top:244.8px;width:1px;height:533.0px;background:#a9a9a9"></div>
<div style="left:97px;top:244.8px;width:1px;height:533.0px;background:#bcbcbc"></div>
<div style="left:96px;top:777.8px;width:1px;height:50px;background:#dadada"></div>
<div style="left:160px;top:224px;width:1px;height:21px;background:#b8b8b8"></div>
<div style="left:160px;top:244.8px;width:1px;height:533.0px;background:#a9a9a9"></div>
<div style="left:161px;top:244.8px;width:1px;height:533.0px;background:#bcbcbc"></div>
<div style="left:160px;top:777.8px;width:1px;height:50px;background:#dadada"></div>
<div style="left:223px;top:224px;width:1px;height:21px;background:#b8b8b8"></div>
<div style="left:223px;top:244.8px;width:1px;height:533.0px;background:#a9a9a9"></div>
<div style="left:224px;top:244.8px;width:1px;height:533.0px;background:#bcbcbc"></div>
<div style="left:223px;top:777.8px;width:1px;height:50px;background:#dadada"></div>
<div style="left:287px;top:224px;width:1px;height:21px;background:#b8b8b8"></div>
<div style="left:287px;top:244.8px;width:1px;height:533.0px;background:#a9a9a9"></div>
<div style="left:288px;top:244.8px;width:1px;height:533.0px;background:#bcbcbc"></div>
<div style="left:287px;top:777.8px;width:1px;height:50px;background:#dadada"></div>
<div style="left:351px;top:224px;width:1px;height:21px;background:#b8b8b8"></div>
<div style="left:351px;top:244.8px;width:1px;height:533.0px;background:#a9a9a9"></div>
<div style="left:352px;top:244.8px;width:1px;height:533.0px;background:#bcbcbc"></div>
<div style="left:351px;top:777.8px;width:1px;height:50px;background:#dadada"></div>
<div style="left:414px;top:224px;width:1px;height:21px;background:#b8b8b8"></div>
<div style="left:414px;top:244.8px;width:1px;height:533.0px;background:#a9a9a9"></div>
<div style="left:415px;top:244.8px;width:1px;height:533.0px;background:#bcbcbc"></div>
<div style="left:414px;top:777.8px;width:1px;height:50px;background:#dadada"></div>
<div style="left:478px;top:224px;width:1px;height:21px;background:#b8b8b8"></div>
<div style="left:478px;top:244.8px;width:1px;height:533.0px;background:#a9a9a9"></div>
<div style="left:479px;top:244.8px;width:1px;height:533.0px;background:#bcbcbc"></div>
<div style="left:478px;top:777.8px;width:1px;height:50px;background:#dadada"></div>
<div style="left:542px;top:224px;width:1px;height:21px;background:#b8b8b8"></div>
<div style="left:542px;top:244.8px;width:1px;height:533.0px;background:#a9a9a9"></div>
<div style="left:543px;top:244.8px;width:1px;height:533.0px;background:#bcbcbc"></div>
<div style="left:542px;top:777.8px;width:1px;height:50px;background:#dadada"></div>
<div style="left:605px;top:224px;width:1px;height:21px;background:#b8b8b8"></div>
<div style="left:605px;top:244.8px;width:1px;height:533.0px;background:#a9a9a9"></div>
<div style="left:606px;top:244.8px;width:1px;height:533.0px;background:#bcbcbc"></div>
<div style="left:605px;top:777.8px;width:1px;height:50px;background:#dadada"></div>
<div style="left:669px;top:224px;width:1px;height:21px;background:#b8b8b8"></div>
<div style="left:669px;top:777.8px;width:1px;height:50px;background:#dadada"></div>
<div style="left:744px;top:224px;width:1px;height:21px;background:#b8b8b8"></div>
<div style="left:744px;top:244.8px;width:1px;height:550px;background:#d9d9d9"></div>
<div style="left:820px;top:224px;width:1px;height:21px;background:#b8b8b8"></div>
<div style="left:820px;top:244.8px;width:1px;height:550px;background:#d9d9d9"></div>
<div style="left:964px;top:224px;width:1px;height:21px;background:#b8b8b8"></div>
<div style="left:964px;top:244.8px;width:1px;height:550px;background:#d9d9d9"></div>
<div style="left:1039px;top:224px;width:1px;height:21px;background:#b8b8b8"></div>
<div style="left:1039px;top:244.8px;width:1px;height:550px;background:#d9d9d9"></div>
<div style="left:1115px;top:224px;width:1px;height:21px;background:#b8b8b8"></div>
<div style="left:1115px;top:244.8px;width:1px;height:550px;background:#d9d9d9"></div>
<div style="left:1190px;top:224px;width:1px;height:21px;background:#b8b8b8"></div>
<div style="left:1190px;top:244.8px;width:1px;height:550px;background:#d9d9d9"></div>
<div style="left:1265px;top:224px;width:1px;height:21px;background:#b8b8b8"></div>
<div style="left:1265px;top:244.8px;width:1px;height:550px;background:#d9d9d9"></div>
<div style="left:1341px;top:224px;width:1px;height:21px;background:#b8b8b8"></div>
<div style="left:1341px;top:244.8px;width:1px;height:550px;background:#d9d9d9"></div>
<div style="left:1416px;top:224px;width:1px;height:21px;background:#b8b8b8"></div>
<div style="left:1416px;top:244.8px;width:1px;height:550px;background:#d9d9d9"></div>
<div style="left:1492px;top:224px;width:1px;height:21px;background:#b8b8b8"></div>
<div style="left:1492px;top:244.8px;width:1px;height:550px;background:#d9d9d9"></div>
<div style="left:5px;top:298px;width:27.5px;height:1px;background:#b8b8b8"></div>
<div style="left:32.5px;top:298px;width:637.5px;height:1px;background:#a9a9a9"></div>
<div style="left:32.5px;top:299px;width:637.5px;height:1px;background:#bcbcbc"></div>
<div style="left:670.0px;top:298px;width:1500px;height:1px;background:#d9d9d9"></div>
<div style="left:5px;top:351px;width:27.5px;height:1px;background:#b8b8b8"></div>
<div style="left:32.5px;top:351px;width:637.5px;height:1px;background:#a9a9a9"></div>
<div style="left:32.5px;top:352px;width:637.5px;height:1px;background:#bcbcbc"></div>
<div style="left:670.0px;top:351px;width:1500px;height:1px;background:#d9d9d9"></div>
<div style="left:5px;top:405px;width:27.5px;height:1px;background:#b8b8b8"></div>
<div style="left:32.5px;top:405px;width:637.5px;height:1px;background:#a9a9a9"></div>
<div style="left:32.5px;top:406px;width:637.5px;height:1px;background:#bcbcbc"></div>
<div style="left:670.0px;top:405px;width:1500px;height:1px;background:#d9d9d9"></div>
<div style="left:5px;top:458px;width:27.5px;height:1px;background:#b8b8b8"></div>
<div style="left:32.5px;top:458px;width:637.5px;height:1px;background:#a9a9a9"></div>
<div style="left:32.5px;top:459px;width:637.5px;height:1px;background:#bcbcbc"></div>
<div style="left:670.0px;top:458px;width:1500px;height:1px;background:#d9d9d9"></div>
<div style="left:5px;top:511px;width:27.5px;height:1px;background:#b8b8b8"></div>
<div style="left:32.5px;top:511px;width:637.5px;height:1px;background:#a9a9a9"></div>
<div style="left:32.5px;top:512px;width:637.5px;height:1px;background:#bcbcbc"></div>
<div style="left:670.0px;top:511px;width:1500px;height:1px;background:#d9d9d9"></div>
<div style="left:5px;top:565px;width:27.5px;height:1px;background:#b8b8b8"></div>
<div style="left:32.5px;top:565px;width:637.5px;height:1px;background:#a9a9a9"></div>
<div style="left:32.5px;top:566px;width:637.5px;height:1px;background:#bcbcbc"></div>
<div style="left:670.0px;top:565px;width:1500px;height:1px;background:#d9d9d9"></div>
<div style="left:5px;top:618px;width:27.5px;height:1px;background:#b8b8b8"></div>
<div style="left:32.5px;top:618px;width:637.5px;height:1px;background:#a9a9a9"></div>
<div style="left:32.5px;top:619px;width:637.5px;height:1px;background:#bcbcbc"></div>
<div style="left:670.0px;top:618px;width:1500px;height:1px;background:#d9d9d9"></div>
<div style="left:5px;top:671px;width:27.5px;height:1px;background:#b8b8b8"></div>
<div style="left:32.5px;top:671px;width:637.5px;height:1px;background:#a9a9a9"></div>
<div style="left:32.5px;top:672px;width:637.5px;height:1px;background:#bcbcbc"></div>
<div style="left:670.0px;top:671px;width:1500px;height:1px;background:#d9d9d9"></div>
<div style="left:5px;top:724px;width:27.5px;height:1px;background:#b8b8b8"></div>
<div style="left:32.5px;top:724px;width:637.5px;height:1px;background:#a9a9a9"></div>
<div style="left:32.5px;top:725px;width:637.5px;height:1px;background:#bcbcbc"></div>
<div style="left:670.0px;top:724px;width:1500px;height:1px;background:#d9d9d9"></div>
<div style="left:5px;top:778px;width:27.5px;height:1px;background:#b8b8b8"></div>
<div style="left:670.0px;top:778px;width:1500px;height:1px;background:#d9d9d9"></div>
<div style="left:5px;top:831px;width:27.5px;height:1px;background:#b8b8b8"></div>
<div style="left:670.0px;top:831px;width:1500px;height:1px;background:#d9d9d9"></div>
<div style="left:5px;top:245px;width:1490px;height:1.3px;background:#a0a0a0"></div>
<div style="left:32px;top:224px;width:1px;height:571px;background:#a8a8a8"></div>
<div class="t" style="left:59.20px;top:225.73px;font-size:16.5px;line-height:16.5px;font-family:'Liberation Sans',sans-serif;color:#217346;">A</div>
<div class="t" style="left:122.95px;top:225.73px;font-size:16.5px;line-height:16.5px;font-family:'Liberation Sans',sans-serif;color:#217346;">B</div>
<div class="t" style="left:186.20px;top:225.73px;font-size:16.5px;line-height:16.5px;font-family:'Liberation Sans',sans-serif;color:#217346;">C</div>
<div class="t" style="left:249.45px;top:225.73px;font-size:16.5px;line-height:16.5px;font-family:'Liberation Sans',sans-serif;color:#217346;">D</div>
<div class="t" style="left:313.95px;top:225.73px;font-size:16.5px;line-height:16.5px;font-family:'Liberation Sans',sans-serif;color:#217346;">E</div>
<div class="t" style="left:377.82px;top:225.73px;font-size:16.5px;line-height:16.5px;font-family:'Liberation Sans',sans-serif;color:#217346;">F</div>
<div class="t" style="left:440.45px;top:225.73px;font-size:16.5px;line-height:16.5px;font-family:'Liberation Sans',sans-serif;color:#217346;">G</div>
<div class="t" style="left:504.82px;top:225.73px;font-size:16.5px;line-height:16.5px;font-family:'Liberation Sans',sans-serif;color:#217346;">H</div>
<div class="t" style="left:571.95px;top:225.73px;font-size:16.5px;line-height:16.5px;font-family:'Liberation Sans',sans-serif;color:#217346;">I</div>
<div class="t" style="left:634.08px;top:225.73px;font-size:16.5px;line-height:16.5px;font-family:'Liberation Sans',sans-serif;color:#217346;">J</div>
<div class="t" style="left:701.20px;top:225.73px;font-size:16.5px;line-height:16.5px;font-family:'Liberation Sans',sans-serif;color:#262626;">K</div>
<div class="t" style="left:777.70px;top:225.73px;font-size:16.5px;line-height:16.5px;font-family:'Liberation Sans',sans-serif;color:#262626;">L</div>
<div class="t" style="left:885.83px;top:225.73px;font-size:16.5px;line-height:16.5px;font-family:'Liberation Sans',sans-serif;color:#262626;">M</div>
<div class="t" style="left:996.33px;top:225.73px;font-size:16.5px;line-height:16.5px;font-family:'Liberation Sans',sans-serif;color:#262626;">N</div>
<div class="t" style="left:1071.33px;top:225.73px;font-size:16.5px;line-height:16.5px;font-family:'Liberation Sans',sans-serif;color:#262626;">O</div>
<div class="t" style="left:1147.45px;top:225.73px;font-size:16.5px;line-height:16.5px;font-family:'Liberation Sans',sans-serif;color:#262626;">P</div>
<div class="t" style="left:1221.83px;top:225.73px;font-size:16.5px;line-height:16.5px;font-family:'Liberation Sans',sans-serif;color:#262626;">Q</div>
<div class="t" style="left:1297.58px;top:225.73px;font-size:16.5px;line-height:16.5px;font-family:'Liberation Sans',sans-serif;color:#262626;">R</div>
<div class="t" style="left:1373.70px;top:225.73px;font-size:16.5px;line-height:16.5px;font-family:'Liberation Sans',sans-serif;color:#262626;">S</div>
<div class="t" style="left:1449.70px;top:225.73px;font-size:16.5px;line-height:16.5px;font-family:'Liberation Sans',sans-serif;color:#262626;">T</div>
<div class="t" style="left:13.05px;top:278.96px;font-size:16px;line-height:16px;font-family:'Liberation Sans',sans-serif;color:#217346;">1</div>
<div class="t" style="left:13.43px;top:331.96px;font-size:16px;line-height:16px;font-family:'Liberation Sans',sans-serif;color:#217346;">2</div>
<div class="t" style="left:13.43px;top:385.96px;font-size:16px;line-height:16px;font-family:'Liberation Sans',sans-serif;color:#217346;">3</div>
<div class="t" style="left:13.43px;top:438.96px;font-size:16px;line-height:16px;font-family:'Liberation Sans',sans-serif;color:#217346;">4</div>
<div class="t" style="left:13.30px;top:491.96px;font-size:16px;line-height:16px;font-family:'Liberation Sans',sans-serif;color:#217346;">5</div>
<div class="t" style="left:13.30px;top:545.96px;font-size:16px;line-height:16px;font-family:'Liberation Sans',sans-serif;color:#217346;">6</div>
<div class="t" style="left:13.43px;top:598.96px;font-size:16px;line-height:16px;font-family:'Liberation Sans',sans-serif;color:#217346;">7</div>
<div class="t" style="left:13.30px;top:651.96px;font-size:16px;line-height:16px;font-family:'Liberation Sans',sans-serif;color:#217346;">8</div>
<div class="t" style="left:13.30px;top:704.96px;font-size:16px;line-height:16px;font-family:'Liberation Sans',sans-serif;color:#217346;">9</div>
<div class="t" style="left:8.55px;top:758.96px;font-size:16px;line-height:16px;font-family:'Liberation Sans',sans-serif;color:#217346;">10</div>
<div class="t" style="left:9.18px;top:782.46px;font-size:16px;line-height:16px;font-family:'Liberation Sans',sans-serif;color:#262626;">11</div>
<div class="t c" style="left:45.50px;top:264.20px">91<span class="p">%</span></div>
<div class="t c" style="left:109.25px;top:264.20px">92<span class="p">%</span></div>
<div class="t c" style="left:173.00px;top:264.20px">93<span class="p">%</span></div>
<div class="t c" style="left:236.75px;top:264.20px">94<span class="p">%</span></div>
<div class="t c" style="left:300.50px;top:264.20px">95<span class="p">%</span></div>
<div class="t c" style="left:364.25px;top:264.20px">96<span class="p">%</span></div>
<div class="t c" style="left:428.00px;top:264.20px">97<span class="p">%</span></div>
<div class="t c" style="left:491.75px;top:264.20px">98<span class="p">%</span></div>
<div class="t c" style="left:555.50px;top:264.20px">99<span class="p">%</span></div>
<div class="t c" style="left:619.25px;top:264.20px">100<span class="p">%</span></div>
<div class="t c" style="left:45.50px;top:317.50px">81<span class="p">%</span></div>
<div class="t c" style="left:109.25px;top:317.50px">82<span class="p">%</span></div>
<div class="t c" style="left:173.00px;top:317.50px">83<span class="p">%</span></div>
<div class="t c" style="left:236.75px;top:317.50px">84<span class="p">%</span></div>
<div class="t c" style="left:300.50px;top:317.50px">85<span class="p">%</span></div>
<div class="t c" style="left:364.25px;top:317.50px">86<span class="p">%</span></div>
<div class="t c" style="left:428.00px;top:317.50px">87<span class="p">%</span></div>
<div class="t c" style="left:491.75px;top:317.50px">88<span class="p">%</span></div>
<div class="t c" style="left:555.50px;top:317.50px">89<span class="p">%</span></div>
<div class="t c" style="left:619.25px;top:317.50px">90<span class="p">%</span></div>
<div class="t c" style="left:45.50px;top:370.80px">71<span class="p">%</span></div>
<div class="t c" style="left:109.25px;top:370.80px">72<span class="p">%</span></div>
<div class="t c" style="left:173.00px;top:370.80px">73<span class="p">%</span></div>
<div class="t c" style="left:236.75px;top:370.80px">74<span class="p">%</span></div>
<div class="t c" style="left:300.50px;top:370.80px">75<span class="p">%</span></div>
<div class="t c" style="left:364.25px;top:370.80px">76<span class="p">%</span></div>
<div class="t c" style="left:428.00px;top:370.80px">77<span class="p">%</span></div>
<div class="t c" style="left:491.75px;top:370.80px">78<span class="p">%</span></div>
<div class="t c" style="left:555.50px;top:370.80px">79<span class="p">%</span></div>
<div class="t c" style="left:619.25px;top:370.80px">80<span class="p">%</span></div>
<div class="t c" style="left:45.50px;top:424.10px">61<span class="p">%</span></div>
<div class="t c" style="left:109.25px;top:424.10px">62<span class="p">%</span></div>
<div class="t c" style="left:173.00px;top:424.10px">63<span class="p">%</span></div>
<div class="t c" style="left:236.75px;top:424.10px">64<span class="p">%</span></div>
<div class="t c" style="left:300.50px;top:424.10px">65<span class="p">%</span></div>
<div class="t c" style="left:364.25px;top:424.10px">66<span class="p">%</span></div>
<div class="t c" style="left:428.00px;top:424.10px">67<span class="p">%</span></div>
<div class="t c" style="left:491.75px;top:424.10px">68<span class="p">%</span></div>
<div class="t c" style="left:555.50px;top:424.10px">69<span class="p">%</span></div>
<div class="t c" style="left:619.25px;top:424.10px">70<span class="p">%</span></div>
<div class="t c" style="left:45.50px;top:477.40px">51<span class="p">%</span></div>
<div class="t c" style="left:109.25px;top:477.40px">52<span class="p">%</span></div>
<div class="t c" style="left:173.00px;top:477.40px">53<span class="p">%</span></div>
<div class="t c" style="left:236.75px;top:477.40px">54<span class="p">%</span></div>
<div class="t c" style="left:300.50px;top:477.40px">55<span class="p">%</span></div>
<div class="t c" style="left:364.25px;top:477.40px">56<span class="p">%</span></div>
<div class="t c" style="left:428.00px;top:477.40px">57<span class="p">%</span></div>
<div class="t c" style="left:491.75px;top:477.40px">58<span class="p">%</span></div>
<div class="t c" style="left:555.50px;top:477.40px">59<span class="p">%</span></div>
<div class="t c" style="left:619.25px;top:477.40px">60<span class="p">%</span></div>
<div class="t c" style="left:45.50px;top:530.70px">41<span class="p">%</span></div>
<div class="t c" style="left:109.25px;top:530.70px">42<span class="p">%</span></div>
<div class="t c" style="left:173.00px;top:530.70px">43<span class="p">%</span></div>
<div class="t c" style="left:236.75px;top:530.70px">44<span class="p">%</span></div>
<div class="t c" style="left:300.50px;top:530.70px">45<span class="p">%</span></div>
<div class="t c" style="left:364.25px;top:530.70px">46<span class="p">%</span></div>
<div class="t c" style="left:428.00px;top:530.70px">47<span class="p">%</span></div>
<div class="t c" style="left:491.75px;top:530.70px">48<span class="p">%</span></div>
<div class="t c" style="left:555.50px;top:530.70px">49<span class="p">%</span></div>
<div class="t c" style="left:619.25px;top:530.70px">50<span class="p">%</span></div>
<div class="t c" style="left:45.50px;top:584.00px">31<span class="p">%</span></div>
<div class="t c" style="left:109.25px;top:584.00px">32<span class="p">%</span></div>
<div class="t c" style="left:173.00px;top:584.00px">33<span class="p">%</span></div>
<div class="t c" style="left:236.75px;top:584.00px">34<span class="p">%</span></div>
<div class="t c" style="left:300.50px;top:584.00px">35<span class="p">%</span></div>
<div class="t c" style="left:364.25px;top:584.00px">36<span class="p">%</span></div>
<div class="t c" style="left:428.00px;top:584.00px">37<span class="p">%</span></div>
<div class="t c" style="left:491.75px;top:584.00px">38<span class="p">%</span></div>
<div class="t c" style="left:555.50px;top:584.00px">39<span class="p">%</span></div>
<div class="t c" style="left:619.25px;top:584.00px">40<span class="p">%</span></div>
<div class="t c" style="left:45.50px;top:637.30px">21<span class="p">%</span></div>
<div class="t c" style="left:109.25px;top:637.30px">22<span class="p">%</span></div>
<div class="t c" style="left:173.00px;top:637.30px">23<span class="p">%</span></div>
<div class="t c" style="left:236.75px;top:637.30px">24<span class="p">%</span></div>
<div class="t c" style="left:300.50px;top:637.30px">25<span class="p">%</span></div>
<div class="t c" style="left:364.25px;top:637.30px">26<span class="p">%</span></div>
<div class="t c" style="left:428.00px;top:637.30px">27<span class="p">%</span></div>
<div class="t c" style="left:491.75px;top:637.30px">28<span class="p">%</span></div>
<div class="t c" style="left:555.50px;top:637.30px">29<span class="p">%</span></div>
<div class="t c" style="left:619.25px;top:637.30px">30<span class="p">%</span></div>
<div class="t c" style="left:45.50px;top:690.60px">11<span class="p">%</span></div>
<div class="t c" style="left:109.25px;top:690.60px">12<span class="p">%</span></div>
<div class="t c" style="left:173.00px;top:690.60px">13<span class="p">%</span></div>
<div class="t c" style="left:236.75px;top:690.60px">14<span class="p">%</span></div>
<div class="t c" style="left:300.50px;top:690.60px">15<span class="p">%</span></div>
<div class="t c" style="left:364.25px;top:690.60px">16<span class="p">%</span></div>
<div class="t c" style="left:428.00px;top:690.60px">17<span class="p">%</span></div>
<div class="t c" style="left:491.75px;top:690.60px">18<span class="p">%</span></div>
<div class="t c" style="left:555.50px;top:690.60px">19<span class="p">%</span></div>
<div class="t c" style="left:619.25px;top:690.60px">20<span class="p">%</span></div>
<div class="t c" style="left:45.50px;top:743.90px">1<span class="p">%</span></div>
<div class="t c" style="left:109.25px;top:743.90px">2<span class="p">%</span></div>
<div class="t c" style="left:173.00px;top:743.90px">3<span class="p">%</span></div>
<div class="t c" style="left:236.75px;top:743.90px">4<span class="p">%</span></div>
<div class="t c" style="left:300.50px;top:743.90px">5<span class="p">%</span></div>
<div class="t c" style="left:364.25px;top:743.90px">6<span class="p">%</span></div>
<div class="t c" style="left:428.00px;top:743.90px">7<span class="p">%</span></div>
<div class="t c" style="left:491.75px;top:743.90px">8<span class="p">%</span></div>
<div class="t c" style="left:555.50px;top:743.90px">9<span class="p">%</span></div>
<div class="t c" style="left:619.25px;top:743.90px">10<span class="p">%</span></div>
<div style="left:33.5px;top:246px;width:635.5px;height:531px;box-sizing:border-box;border-right:2px solid #fff;border-bottom:2px solid #fff;border-left:1px solid #fff;border-top:1px solid #fff"></div>
<div style="left:31px;top:243px;width:641px;height:537px;box-sizing:border-box;border:3px solid #217346"></div>
<div style="left:665px;top:773.5px;width:8.5px;height:8.5px;background:#217346;box-sizing:border-box;border:1px solid #fff"></div>
<div style="left:666px;top:774.5px;width:6.8px;height:6.5px;background:#217346"></div>
<div style="left:819.6px;top:458px;width:145.4px;height:54px;box-sizing:border-box;border:1.4px solid #111;background:#fff"></div>
<div class="t" style="left:871.5px;top:475px;font:23.4px/23.4px 'Liberation Serif',serif;letter-spacing:2.9px;color:#4a4a4a">55<span class="p">%</span></div>
<div style="left:1002.5px;top:137px;width:239.5px;height:389.5px;background:#fff;box-sizing:border-box;border:2px solid #d6d6d6;box-shadow:2px 3px 4px rgba(0,0,0,.10)"></div>
<div class="t" style="left:1063.38px;top:164.46px;font-size:16px;line-height:16px;font-family:'Liberation Sans',sans-serif;font-weight:bold;color:#4a4a4a;transform:scaleX(0.9163);">Highlight Cells Rules</div>
<div class="t" style="left:1064.06px;top:220.86px;font-size:16px;line-height:16px;font-family:'Liberation Sans',sans-serif;font-weight:bold;color:#4a4a4a;transform:scaleX(0.9702);">Top/Bottom Rules</div>
<div class="t" style="left:1063.36px;top:280.86px;font-size:16px;line-height:16px;font-family:'Liberation Sans',sans-serif;font-weight:bold;color:#4a4a4a;transform:scaleX(0.9411);">Data Bars</div>
<div class="t" style="left:1063.63px;top:338.26px;font-size:16px;line-height:16px;font-family:'Liberation Sans',sans-serif;font-weight:bold;color:#4a4a4a;transform:scaleX(0.8869);">Color Scales</div>
<div class="t" style="left:1063.35px;top:395.46px;font-size:16px;line-height:16px;font-family:'Liberation Sans',sans-serif;font-weight:bold;color:#4a4a4a;transform:scaleX(0.9453);">Icon Sets</div>
<div style="left:1063.5px;top:179px;width:11.5px;height:1.6px;background:#8a8a8a"></div>
<div style="left:1063.5px;top:236px;width:10px;height:1.6px;background:#8a8a8a"></div>
<div style="left:1063.5px;top:296px;width:11px;height:1.6px;background:#8a8a8a"></div>
<div style="left:1104px;top:353.5px;width:10px;height:1.6px;background:#8a8a8a"></div>
<div style="left:1063.5px;top:411px;width:5px;height:1.6px;background:#8a8a8a"></div>
<svg style="left:1221px;top:163px;" width="8" height="10" viewBox="0 0 8 10"><path d="M1 1l5 4-5 4z" fill="#555"/></svg>
<svg style="left:1221px;top:220px;" width="8" height="10" viewBox="0 0 8 10"><path d="M1 1l5 4-5 4z" fill="#555"/></svg>
<svg style="left:1221px;top:280px;" width="8" height="10" viewBox="0 0 8 10"><path d="M1 1l5 4-5 4z" fill="#555"/></svg>
<svg style="left:1221px;top:337px;" width="8" height="10" viewBox="0 0 8 10"><path d="M1 1l5 4-5 4z" fill="#555"/></svg>
<svg style="left:1221px;top:394px;" width="8" height="10" viewBox="0 0 8 10"><path d="M1 1l5 4-5 4z" fill="#555"/></svg>
<svg style="left:1221px;top:473px;" width="8" height="10" viewBox="0 0 8 10"><path d="M1 1l5 4-5 4z" fill="#555"/></svg>
<div style="left:1062.7px;top:254px;width:176px;height:1px;background:#dbe3ec"></div>
<svg style="left:1015px;top:149px;" width="40" height="41" viewBox="0 0 40 41"><rect x="1" y="1" width="36" height="31" fill="#fff" stroke="#8a8a8a" stroke-width="1.3"/><path d="M10.5 1v31M27.5 1v31M1 9h36M1 17h36M1 24h36" stroke="#9a9a9a" stroke-width="1"/><rect x="10.5" y="9" width="17" height="8" fill="#f0c87a"/><rect x="19" y="23" width="20" height="16.5" fill="#fff" stroke="#8a8a8a" stroke-width="1.2"/><path d="M27 25.5L21.8 28.2L27 30.9M21.8 33h5.4M21.8 35.6h5.4M30.5 31.2L36.2 33.9L30.5 36.6" fill="none" stroke="#444" stroke-width="1.2"/></svg>
<svg style="left:1015px;top:206px;" width="40" height="41" viewBox="0 0 40 41"><rect x="1" y="1.5" width="36" height="31" fill="#fff" stroke="#8a8a8a" stroke-width="1.3"/><rect x="11" y="1.5" width="16" height="21" fill="#f0c87a"/><path d="M10.5 1v31M27.5 1v31M1 9h36M1 17h36M1 24h36" stroke="#9a9a9a" stroke-width="1"/><path d="M19 22V4M14 9l5-5 5 5" fill="none" stroke="#555" stroke-width="1.6"/><rect x="19" y="23.5" width="20" height="16" fill="#fff" stroke="#8a8a8a" stroke-width="1.2"/><text x="21" y="37.5" font-family="Liberation Sans" font-size="12.5" fill="#333">10</text></svg>
<svg style="left:1015px;top:267.5px;" width="38" height="36" viewBox="0 0 38 36"><rect x="0.8" y="0.8" width="36" height="33" fill="#fff" stroke="#8a8a8a" stroke-width="1.3"/><rect x="9.5" y="1.5" width="10" height="5.5" fill="#4a7ebb"/><rect x="22" y="3.8" width="4" height="1.2" fill="#555"/><rect x="9.5" y="8.0" width="3" height="5.5" fill="#4a7ebb"/><rect x="22" y="10.3" width="4" height="1.2" fill="#555"/><rect x="9.5" y="14.5" width="7" height="5.5" fill="#4a7ebb"/><rect x="22" y="16.8" width="4" height="1.2" fill="#555"/><rect x="9.5" y="21.0" width="9" height="5.5" fill="#4a7ebb"/><rect x="22" y="23.3" width="4" height="1.2" fill="#555"/><rect x="9.5" y="27.5" width="6" height="5.5" fill="#4a7ebb"/><rect x="22" y="29.8" width="4" height="1.2" fill="#555"/><path d="M9 1v33M28 1v33M1 7.5h36M1 14h36M1 20.5h36M1 27h36" stroke="#9a9a9a" stroke-width="1"/></svg>
<svg style="left:1015px;top:324.5px;" width="38" height="36" viewBox="0 0 38 36"><rect x="0.8" y="0.8" width="36" height="33" fill="#fff" stroke="#8a8a8a" stroke-width="1.3"/><rect x="9.5" y="1.5" width="18" height="5.5" fill="#4a7ebb"/><rect x="19" y="3.8" width="7" height="1.4" fill="#444"/><rect x="9.5" y="8.0" width="18" height="5.5" fill="#6fa88a"/><rect x="19" y="10.3" width="7" height="1.4" fill="#444"/><rect x="9.5" y="14.5" width="18" height="5.5" fill="#f0c87a"/><rect x="19" y="16.8" width="7" height="1.4" fill="#444"/><rect x="9.5" y="21.0" width="18" height="5.5" fill="#ee9a4d"/><rect x="19" y="23.3" width="7" height="1.4" fill="#444"/><rect x="9.5" y="27.5" width="18" height="5.5" fill="#e06642"/><rect x="19" y="29.8" width="7" height="1.4" fill="#444"/><path d="M9 1v33M28 1v33M1 7.5h36M1 14h36M1 20.5h36M1 27h36" stroke="#9a9a9a" stroke-width="1"/></svg>
<svg style="left:1015px;top:382px;" width="38" height="36" viewBox="0 0 38 36"><rect x="0.8" y="0.8" width="36" height="33" fill="#fff" stroke="#8a8a8a" stroke-width="1.3"/><circle cx="13" cy="4.3" r="1.8" fill="#6fa88a"/><rect x="17" y="3.6" width="9" height="1.3" fill="#555"/><circle cx="13" cy="10.8" r="1.8" fill="#ee9a4d"/><rect x="17" y="10.1" width="9" height="1.3" fill="#555"/><circle cx="13" cy="17.3" r="1.8" fill="#6fa88a"/><rect x="17" y="16.6" width="9" height="1.3" fill="#555"/><circle cx="13" cy="23.8" r="1.8" fill="#ee9a4d"/><rect x="17" y="23.1" width="9" height="1.3" fill="#555"/><circle cx="13" cy="30.3" r="1.8" fill="#6fa88a"/><rect x="17" y="29.6" width="9" height="1.3" fill="#555"/><path d="M9 1v33M28 1v33M1 7.5h36M1 14h36M1 20.5h36M1 27h36" stroke="#9a9a9a" stroke-width="1"/></svg>
<div style="left:1000.6px;top:426.4px;width:245.4px;height:39.2px;box-sizing:border-box;border:5px solid #ff1616;background:#c6c6c6"></div>
<svg style="left:1011px;top:436px;" width="20" height="20" viewBox="0 0 20 20"><g transform="translate(0.5 0.5)"><rect x="0.8" y="0.8" width="15.4" height="15.4" fill="#fff" stroke="#6a6a6a" stroke-width="1.4"/><path d="M1.5 5.6h14M1.5 11.2h14M5.6 1.5v14M11.2 1.5v14" stroke="#a8a8a8" stroke-width="1.1"/><rect x="5.2" y="5.2" width="6.4" height="6.4" fill="#efc57c"/></g></svg>
<div class="t" style="left:1046.05px;top:437.96px;font-size:15.4px;line-height:15.4px;font-family:'Liberation Sans',sans-serif;color:#333;">New Rule...</div>
<div style="left:1047.3px;top:452.5px;width:11px;height:1.5px;background:#555"></div>
<svg style="left:1011px;top:467px;" width="24" height="24" viewBox="0 0 24 24"><g transform="translate(0.5 0.5)"><rect x="0.8" y="0.8" width="15.4" height="15.4" fill="#fff" stroke="#6a6a6a" stroke-width="1.4"/><path d="M1.5 5.6h14M1.5 11.2h14M5.6 1.5v14M11.2 1.5v14" stroke="#a8a8a8" stroke-width="1.1"/><rect x="5.2" y="5.2" width="6.4" height="6.4" fill="#efc57c"/></g><path d="M9.5 18L16.5 10.5Q18 9 19.5 10.5L21 12Q22.5 13.5 21 15L14 22Q12.5 23.5 11 22L9.5 20.5Q8 19 9.5 18Z" fill="#e8899b" stroke="#fff" stroke-width="0.8"/><path d="M10.5 17L15 21.5" stroke="#fff" stroke-width="1"/></svg>
<div class="t" style="left:1046.59px;top:469.26px;font-size:15.4px;line-height:15.4px;font-family:'Liberation Sans',sans-serif;color:#5e5e5e;transform:scaleX(0.9482);">Clear Rules</div>
<div style="left:1047.3px;top:484px;width:10px;height:1.5px;background:#777"></div>
<svg style="left:1009px;top:497px;" width="24" height="24" viewBox="0 0 24 24"><path d="M1 17V1H18" fill="none" stroke="#8a8a8a" stroke-width="1.2"/><g transform="translate(3.5 3.5)"><rect x="0.8" y="0.8" width="15.4" height="15.4" fill="#fff" stroke="#6a6a6a" stroke-width="1.4"/><path d="M1.5 5.6h14M1.5 11.2h14M5.6 1.5v14M11.2 1.5v14" stroke="#a8a8a8" stroke-width="1.1"/><rect x="5.2" y="5.2" width="6.4" height="6.4" fill="#efc57c"/></g></svg>
<div class="t" style="left:1046.68px;top:500.76px;font-size:15.4px;line-height:15.4px;font-family:'Liberation Sans',sans-serif;color:#5e5e5e;transform:scaleX(0.9764);">Manage Rules...</div>
<div style="left:1107px;top:515px;width:8.5px;height:1.5px;background:#777"></div>
<svg style="left:960px;top:70px;" width="80" height="60" viewBox="0 0 80 60"><path d="M7.9 38.3L18.4 53.6L54 30L57.8 34.5L66.8 9L39 7.9L42.8 13.5Z" fill="#ff1616"/></svg>
<div style="left:0px;top:0px;width:1500px;height:5px;background:#a6a6a6"></div>
<div style="left:0px;top:795px;width:1500px;height:5px;background:#a6a6a6"></div>
<div style="left:0px;top:0px;width:5px;height:800px;background:#a6a6a6"></div>
<div style="left:1495px;top:0px;width:5px;height:800px;background:#a6a6a6"></div>
</body></html>
